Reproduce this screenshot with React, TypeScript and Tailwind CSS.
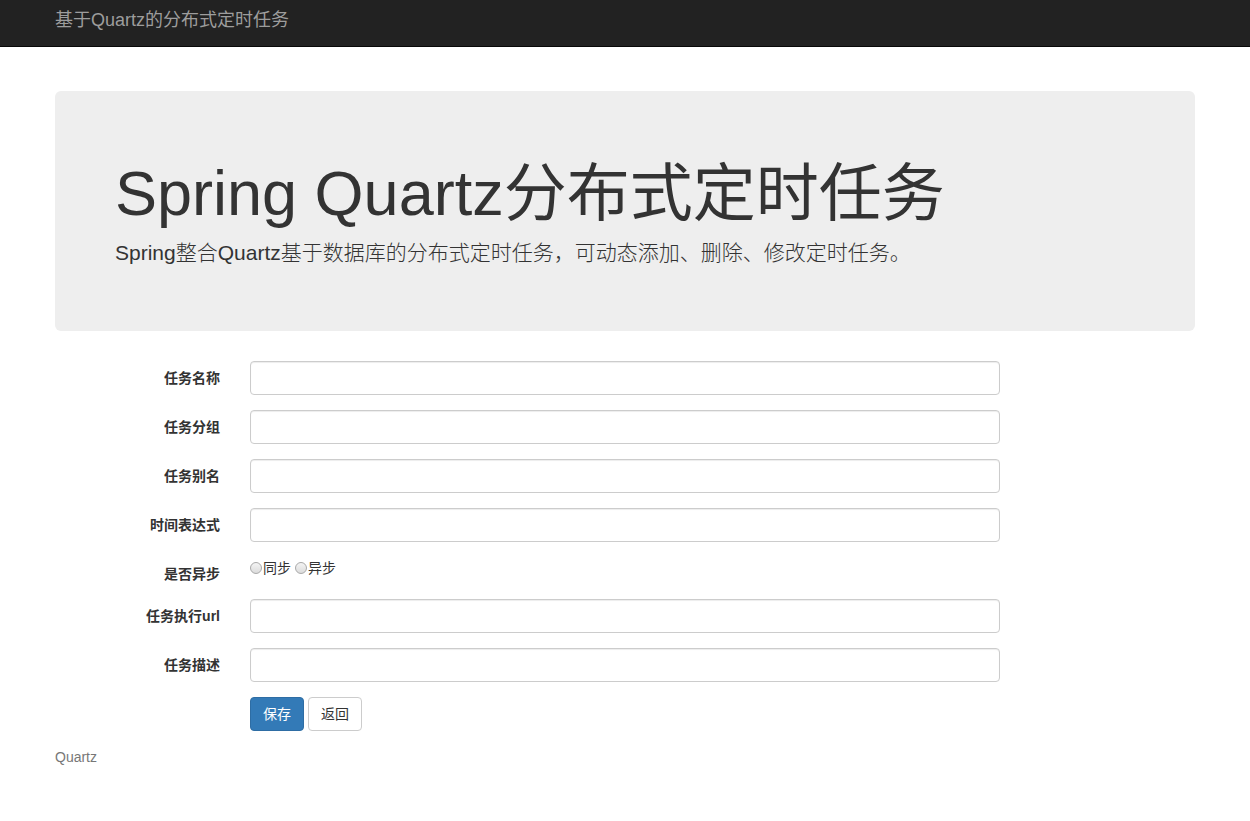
import React from "react"

const font = { fontFamily: '"Liberation Sans", "Noto Sans CJK SC", sans-serif' }

const fields = [
  { label: "任务名称", type: "input" },
  { label: "任务分组", type: "input" },
  { label: "任务别名", type: "input" },
  { label: "时间表达式", type: "input" },
  { label: "是否异步", type: "radio" },
  { label: "任务执行url", type: "input" },
  { label: "任务描述", type: "input" },
]

function Radio({ label }: { label: string }) {
  return (
    <label className="flex items-center text-[14px] leading-[20px] text-[#333]">
      <span className="inline-block w-[12px] h-[12px] rounded-full border border-[#a9a9a9] bg-gradient-to-b from-[#f4f4f4] to-[#dcdcdc] mr-[1px]" />
      {label}
    </label>
  )
}

export default function App() {
  return (
    <div className="min-h-[821px] bg-white text-[14px] text-[#333]" style={font}>
      <nav className="h-[47px] bg-[#222] border-b border-[#080808]">
        <div className="mx-[55px] h-[46px] flex items-center">
          <span className="text-[18px] text-[#9d9d9d] leading-[20px] -mt-[6px]">基于Quartz的分布式定时任务</span>
        </div>
      </nav>

      <div className="mx-[55px]">
        <div className="mt-[44px] bg-[#eee] rounded-[6px] px-[60px] py-[48px]">
          <h1 className="mt-[20px] mb-[10px] text-[63px] leading-[69px] font-normal">
            Spring Quartz分布式定时任务
          </h1>
          <p className="mb-[15px] text-[21px] leading-[30px] font-light">
            Spring整合Quartz基于数据库的分布式定时任务，可动态添加、删除、修改定时任务。
          </p>
        </div>

        <form className="mt-[30px] -mx-[15px]">
          {fields.map((f) => (
            <div key={f.label} className="flex mb-[15px]">
              <div className="w-[195px] px-[15px] pt-[7px] text-right font-bold text-[14px] leading-[20px]">
                {f.label}
              </div>
              <div className="w-[780px] px-[15px]">
                {f.type === "input" ? (
                  <input
                    className="w-full h-[34px] border border-[#ccc] rounded-[4px] px-[12px] shadow-[inset_0_1px_1px_rgba(0,0,0,0.075)] outline-none"
                  />
                ) : (
                  <div className="flex gap-[4px] h-[27px] -mt-[3px]">
                    <Radio label="同步" />
                    <Radio label="异步" />
                  </div>
                )}
              </div>
            </div>
          ))}
          <div className="flex">
            <div className="w-[195px]" />
            <div className="px-[15px] flex gap-[4px]">
              <button
                type="button"
                className="h-[34px] px-[12px] rounded-[4px] bg-[#337ab7] border border-[#2e6da4] text-white text-[14px]"
              >
                保存
              </button>
              <button
                type="button"
                className="h-[34px] px-[12px] rounded-[4px] bg-white border border-[#ccc] text-[#333] text-[14px]"
              >
                返回
              </button>
            </div>
          </div>
        </form>

        <footer className="mt-[16px] text-[14px] text-[#777] leading-[20px]">Quartz</footer>
      </div>
    </div>
  )
}
